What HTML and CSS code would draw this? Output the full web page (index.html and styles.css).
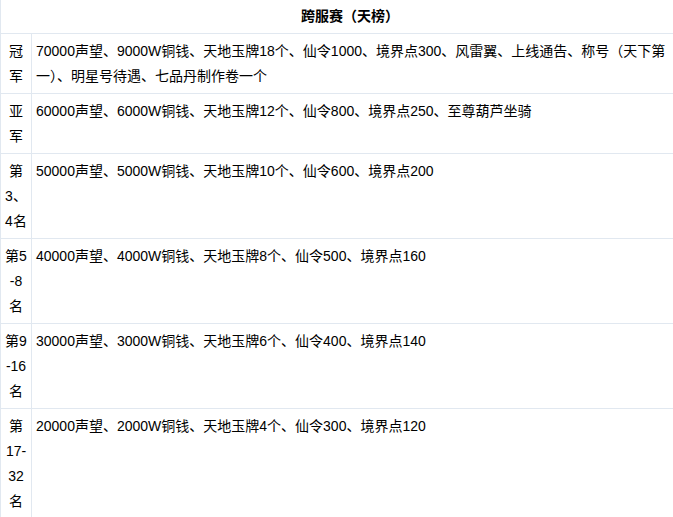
FILE: index.html
```html
<!DOCTYPE html>
<html lang="zh-CN">
<head>
    <meta charset="UTF-8">
    <meta name="viewport" content="width=device-width, initial-scale=1.0">
    <title>跨服赛（天榜）</title>
    <link rel="stylesheet" href="styles.css">
</head>
<body>
    <div class="wrap">
        <table class="rank-table">
            <colgroup>
                <col class="col-rank">
                <col class="col-reward">
            </colgroup>
            <thead>
                <tr>
                    <th colspan="2">跨服赛（天榜）</th>
                </tr>
            </thead>
            <tbody>
                <tr>
                    <td class="rank">冠军</td>
                    <td class="reward">70000声望、9000W铜钱、天地玉牌18个、仙令1000、境界点300、风雷翼、上线通告、称号（天下第一）、明星号待遇、七品丹制作卷一个</td>
                </tr>
                <tr>
                    <td class="rank">亚军</td>
                    <td class="reward">60000声望、6000W铜钱、天地玉牌12个、仙令800、境界点250、至尊葫芦坐骑</td>
                </tr>
                <tr>
                    <td class="rank">第3、4名</td>
                    <td class="reward">50000声望、5000W铜钱、天地玉牌10个、仙令600、境界点200</td>
                </tr>
                <tr>
                    <td class="rank">第5<wbr>-8名</td>
                    <td class="reward">40000声望、4000W铜钱、天地玉牌8个、仙令500、境界点160</td>
                </tr>
                <tr>
                    <td class="rank">第9<wbr>-16名</td>
                    <td class="reward">30000声望、3000W铜钱、天地玉牌6个、仙令400、境界点140</td>
                </tr>
                <tr>
                    <td class="rank">第17-<wbr>32名</td>
                    <td class="reward">20000声望、2000W铜钱、天地玉牌4个、仙令300、境界点120</td>
                </tr>
            </tbody>
        </table>
    </div>
</body>
</html>
```

FILE: styles.css
```css
html, body {
    margin: 0;
    padding: 0;
    background: #fff;
    overflow: hidden;
}
body {
    font-family: "Liberation Sans", "Noto Sans CJK SC", sans-serif;
    font-size: 14px;
    color: #000;
}
.wrap {
    width: 673px;
    overflow: hidden;
}
.rank-table {
    width: 700px;
    border-collapse: collapse;
    table-layout: fixed;
}
.col-rank {
    width: 31px;
}
.rank-table th,
.rank-table td {
    border: 1px solid #e1e8f0;
    line-height: 25px;
    vertical-align: top;
}
.rank-table th {
    border-top: none;
    padding: 4px;
    font-weight: bold;
    text-align: center;
}
.rank-table td {
    padding: 5px 4px 4px;
}
.rank {
    text-align: center;
}
.reward {
    text-align: left;
}
```
